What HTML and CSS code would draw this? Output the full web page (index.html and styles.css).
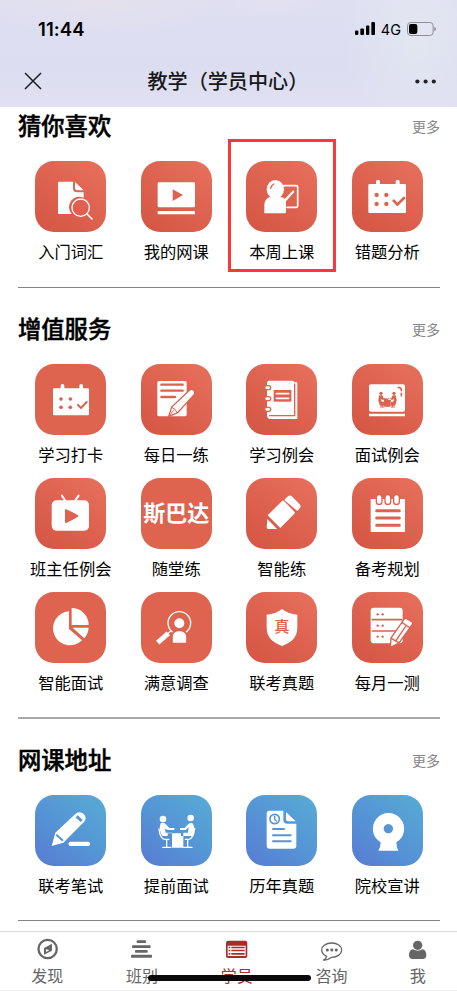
FILE: index.html
```html
<!DOCTYPE html>
<html lang="zh-CN">
<head>
<meta charset="utf-8">
<meta name="viewport" content="width=device-width, initial-scale=1">
<title>教学（学员中心）</title>
<link rel="stylesheet" href="styles.css">
</head>
<body>
<div class="app">
  <header class="topbar">
    <div class="status">
      <span class="time">11:44</span>
      <div class="status-right">
        <svg class="signal" viewBox="0 0 60 40"><rect x="0" y="25" width="10" height="14" rx="3"/><rect x="16" y="19" width="11" height="20" rx="3"/><rect x="33" y="10" width="10" height="29" rx="3"/><rect x="49" y="0" width="11" height="39" rx="3"/></svg>
        <span class="network">4G</span>
        <svg class="battery" viewBox="0 0 87 42"><rect x="1.5" y="1.5" width="77" height="39" rx="10" fill="none" stroke="#8d8e99" stroke-width="3"/><rect x="6" y="6" width="25" height="30" rx="6"/><path d="M82 14q5 3 5 7t-5 7z" fill="#8d8e99"/></svg>
      </div>
    </div>
    <div class="nav">
      <svg class="close" viewBox="0 0 18 18"><path d="M1 1l16 16M17 1L1 17"/></svg>
      <h1>教学（学员中心）</h1>
      <svg class="dots" viewBox="0 0 22 5"><circle cx="2.4" cy="2.5" r="2.1"/><circle cx="10.6" cy="2.5" r="2.1"/><circle cx="18.8" cy="2.5" r="2.1"/></svg>
    </div>
  </header>

  <main>
    <section class="section">
      <div class="section-head"><h2>猜你喜欢</h2><a class="more">更多</a></div>
      <div class="grid">
        <div class="item">
          <svg class="tile" viewBox="106 168 213 213"><path d="M178 230h42v20q0 12 12 12h20v16a31 31 0 0 0-36 49h-38q-3 0-3-3v-91q0-3 3-3z"/><path d="M226 231l26 25h-19q-7 0-7-7z"/><circle class="line" cx="243" cy="308" r="26" stroke-width="4"/><path class="line" d="M262 327l15 15" stroke-width="5"/></svg>
          <span>入门词汇</span>
        </div>
        <div class="item">
          <svg class="tile" viewBox="423 168 213 213"><rect x="473" y="232" width="112" height="75" rx="4"/><path class="cut" d="M518 253l31 17-31 18z"/><rect x="473" y="318" width="112" height="10" rx="2"/></svg>
          <span>我的网课</span>
        </div>
        <div class="item marked">
          <svg class="tile" viewBox="59 168 213 213"><path class="line" d="M172 242h38q4 0 4 4v57q0 4-4 4h-28" stroke-width="5"/><ellipse cx="147" cy="253" rx="26" ry="28"/><path d="M114 325v-24q0-16 14-24h38q5 0 9 5l24-25q4-1 5 4l-25 28v32q0 4-4 4z"/><path class="cutline" d="M133 250q2-8 9-13" stroke-width="4"/></svg>
          <span>本周上课</span>
        </div>
        <div class="item">
          <svg class="tile" viewBox="375 168 213 213"><rect x="447" y="224" width="12" height="24" rx="6"/><rect x="506" y="224" width="12" height="24" rx="6"/><rect x="424" y="237" width="113" height="87" rx="4"/><g class="cut"><circle cx="449" cy="270" r="6.5"/><circle cx="478" cy="270" r="6.5"/><circle cx="449" cy="297" r="6.5"/><circle cx="478" cy="297" r="6.5"/></g><path class="cutline" d="M500 287l11 12 20-20" stroke-width="8"/></svg>
          <span>错题分析</span>
        </div>
      </div>
    </section>

    <section class="section thick">
      <div class="section-head"><h2>增值服务</h2><a class="more">更多</a></div>
      <div class="grid">
        <div class="item">
          <svg class="tile flat" viewBox="106 162 213 213"><rect x="183" y="222" width="11" height="24" rx="5"/><rect x="239" y="222" width="11" height="24" rx="5"/><rect x="160" y="235" width="108" height="81" rx="4"/><g class="cut"><circle cx="184" cy="267" r="5.5"/><circle cx="212" cy="267" r="5.5"/><circle cx="184" cy="292" r="5.5"/><circle cx="212" cy="292" r="5.5"/></g><path class="cutline" d="M235 285l9 9 17-18" stroke-width="6"/></svg>
          <span>学习打卡</span>
        </div>
        <div class="item">
          <svg class="tile" viewBox="423 162 213 213"><rect x="472" y="213" width="88" height="106" rx="5"/><path class="cutline" d="M484 224h64M484 242h64M484 261h41" stroke-width="7"/><path class="edge" d="M506 320l9-29 54-51q6-4 12 1 6 6 2 12l-50 55z" stroke-width="4"/><path class="cutline" d="M515 292q11 3 16 15M507 318l13-16" stroke-width="3"/></svg>
          <span>每日一练</span>
        </div>
        <div class="item">
          <svg class="tile" viewBox="59 162 213 213"><path d="M128 212h70q5 0 5 4 10 0 10 3v108h-83q-8-2-8-10v-95q0-10 6-10z"/><path class="cutline" d="M205 222v95h-75" stroke-width="4"/><rect class="cut" x="142" y="240" width="53" height="35"/><path class="line" d="M150 251h37M150 265h37" stroke-width="5"/><g class="edge" stroke-width="4"><rect x="115" y="227" width="18" height="12" rx="6"/><rect x="115" y="260" width="18" height="12" rx="6"/><rect x="115" y="292" width="18" height="12" rx="6"/></g></svg>
          <span>学习例会</span>
        </div>
        <div class="item">
          <svg class="tile" viewBox="375 162 213 213"><rect x="426" y="223" width="108" height="82" rx="6"/><rect x="426" y="311" width="108" height="8" rx="1"/><g class="cut"><circle cx="462" cy="250" r="5"/><circle cx="501" cy="250" r="5"/><path d="M457 256h9l4 9h10v4h-13l-5-2 2 8h9v12h-14q-7-16-2-31zM506 256h-9l-4 9h-10v4h13l5-2-2 8h-9v12h14q7-16 2-31zM470 266h22l-2 24h-18z"/></g><path class="cutline" d="M456 268q-1 15 8 16M507 268q1 15-8 16M466 284v6M497 284v6M460 291h11M492 291h11" stroke-width="3"/><path class="cutline" d="M514 232q10 1 9 10M523 250v7" stroke-width="5"/></svg>
          <span>面试例会</span>
        </div>
        <div class="item">
          <svg class="tile" viewBox="106 24 213 213"><path class="line" d="M187 77l9 14M237 77l-10 14" stroke-width="6"/><rect x="156" y="91" width="112" height="91" rx="14"/><path class="cut" d="M198 117q39 18 39 21t-39 22q-2 0-2-4v-36q0-3 2-3z"/></svg>
          <span>班主任例会</span>
        </div>
        <div class="item">
          <div class="tile flat wordmark">斯巴达</div>
          <span>随堂练</span>
        </div>
        <div class="item">
          <svg class="tile" viewBox="59 24 213 213"><path d="M180 83l6-5q6-4 12 2l22 23q5 6 1 11l-8 9-39-33zM167 93q3-3 6 0l31 32q3 3 0 6l-42 43-38-38zM123 147l29 30h-26q-5 0-5-5z"/></svg>
          <span>智能练</span>
        </div>
        <div class="item">
          <svg class="tile" viewBox="375 24 213 213"><rect x="431" y="87" width="103" height="99" rx="2"/><g class="edge" stroke-width="4"><rect x="448" y="74" width="17" height="29" rx="8"/><rect x="474" y="74" width="17" height="29" rx="8"/><rect x="500" y="74" width="17" height="29" rx="8"/></g><path class="cutline" d="M449 122h68M449 144h68M449 166h68" stroke-width="9"/></svg>
          <span>备考规划</span>
        </div>
        <div class="item">
          <svg class="tile flat" viewBox="106 21 213 213"><path d="M208 79v53l39 34a51 51 0 1 1-39-87z"/><path d="M216 69a51 51 0 0 1 51 51h-51zM219 128h48q-1 17-13 32z"/></svg>
          <span>智能面试</span>
        </div>
        <div class="item">
          <svg class="tile flat" viewBox="423 21 213 213"><circle class="line" cx="538" cy="114" r="34" stroke-width="4"/><path class="line" d="M502 147l10-9" stroke-width="4"/><path class="line butt" d="M473 173l32-28" stroke-width="15"/><circle class="edge" cx="538" cy="115" r="17" stroke-width="4"/><path class="edge" d="M516 176v-21q0-19 22-19t23 19v21z" stroke-width="5"/></svg>
          <span>满意调查</span>
        </div>
        <div class="item">
          <svg class="tile" viewBox="59 21 213 213"><path d="M167 72q19 15 46 17v40q0 38-46 54-46-16-46-54v-40q27-2 46-17z"/><text x="167" y="142" class="seal">真</text></svg>
          <span>联考真题</span>
        </div>
        <div class="item">
          <svg class="tile" viewBox="375 21 213 213"><rect x="431" y="68" width="96" height="107" rx="9"/><path class="cutline" d="M436 104h88M436 138h72" stroke-width="5"/><g class="cut"><circle cx="452" cy="88" r="3.500"/><circle cx="467" cy="88" r="3.500"/><circle cx="452" cy="122" r="3.500"/><circle cx="467" cy="122" r="3.500"/><circle cx="452" cy="155" r="3.500"/><circle cx="467" cy="155" r="3.500"/></g><path class="edge" d="M490 187l2-28 39-56q4-5 10-1l14 9q4 3 1 7l-40 56z" stroke-width="4"/><path class="cutline" d="M493 160l22 13M506 168l30-44M524 112l26 17" stroke-width="4"/></svg>
          <span>每月一测</span>
        </div>
      </div>
    </section>

    <section class="section last">
      <div class="section-head"><h2>网课地址</h2><a class="more">更多</a></div>
      <div class="grid blue">
        <div class="item">
          <svg class="tile" viewBox="106 165 213 213"><path d="M156 318l11-40 60-56q10-10 22-2 14 10 6 24l-64 64z"/><path class="cutline butt" d="M170 284l20 18" stroke-width="6"/><path class="cutline butt" d="M231 229l15 14" stroke-width="9"/><rect x="207" y="305" width="64" height="13" rx="5"/></svg>
          <span>联考笔试</span>
        </div>
        <div class="item">
          <svg class="tile" viewBox="423 165 213 213"><circle cx="489" cy="237" r="10"/><circle cx="572" cy="234" r="10"/><path d="M482 250q8-4 15 2l11 12h15v6h-19l-9-4 2 12h19v45h34v-45h14l2-16-9 8h-17v-6h14l11-12q8-6 14-1 7 14 1 37h-37v-8h-40v8h-16q-12-18-5-38z"/><path class="line" d="M477 267q3 29 17 31h13M584 265q-3 29-17 33h-11M500 298v22M563 298v22M488 322h25M551 322h25" stroke-width="4"/></svg>
          <span>提前面试</span>
        </div>
        <div class="item">
          <svg class="tile" viewBox="59 165 213 213"><path d="M130 212h41v27q0 12 12 12h27v66q0 9-9 9h-71q-9 0-9-9v-96q0-9 9-9zM179 216l29 28h-22q-7 0-7-7z"/><circle class="cutline" cx="145" cy="237" r="14" stroke-width="5"/><path class="cutline" d="M145 229v9l5 5" stroke-width="4"/><path class="cutline" d="M140 267h33M140 286h53M140 304h53" stroke-width="6"/></svg>
          <span>历年真题</span>
        </div>
        <div class="item">
          <svg class="tile" viewBox="375 165 213 213"><path fill-rule="evenodd" d="M461 307a47 47 0 1 1 47 0q0 15 6 25h-60q7-10 7-25zM484 252a14 14 0 1 0 .1 0z"/></svg>
          <span>院校宣讲</span>
        </div>
      </div>
    </section>
  </main>

  <nav class="tabs">
    <a class="tab"><svg viewBox="110 115 64 64"><circle cx="142" cy="148" r="27.500" fill="none" stroke="currentColor" stroke-width="7"/><path fill-rule="evenodd" d="M155 132v21l-24 12v-20zM137 149v8l10-5z"/></svg><span>发现</span></a>
    <a class="tab"><svg viewBox="396 115 64 64"><rect x="413" y="122" width="28" height="8" rx="2"/><rect x="399" y="137" width="56" height="8" rx="2"/><rect x="408" y="151" width="38" height="8" rx="2"/><rect x="396" y="165" width="63" height="9" rx="2"/></svg><span>班别</span></a>
    <a class="tab active"><svg viewBox="678 115 64 64"><path fill-rule="evenodd" d="M684 123h52q6 0 6 6v40q0 6-6 6h-52q-6 0-6-6v-40q0-6 6-6zM683 138v31h54v-31z"/><path d="M686 141h5v5h-5zM694 141h40v5h-40zM686 150h5v5h-5zM694 150h40v5h-40zM686 160h5v5h-5zM694 160h40v5h-40z"/></svg><span>学员</span></a>
    <a class="tab"><svg viewBox="963 115 64 64"><path d="M980 170c-9-4-15-11-15-19 0-12 13-21 30-21s30 9 30 21-13 22-30 22c-5 4-13 9-25 9 6-3 9-7 10-12z" fill="none" stroke="currentColor" stroke-width="4"/><circle cx="982" cy="151" r="4.500"/><circle cx="995.500" cy="151" r="4.500"/><circle cx="1009" cy="151" r="4.500"/></svg><span>咨询</span></a>
    <a class="tab"><svg viewBox="1223 115 64 64"><circle cx="1255" cy="137" r="14"/><path d="M1241 149q14 9 28 0 12 2 12 17 0 12-11 12h-30q-11 0-11-12 0-15 12-17z"/></svg><span>我</span></a>
    <i class="home"></i>
  </nav>
</div>
</body>
</html>
```
FILE: styles.css
```css
* { box-sizing: border-box; }
body {
  margin: 0;
  background: #fff;
  color: #000;
  font-family: "Noto Sans CJK SC", sans-serif;
}
.app { height: 991px; display: flex; flex-direction: column; overflow: hidden; }
h1, h2 { margin: 0; }

.topbar {
  height: 107px;
  flex: none;
  background:
    radial-gradient(ellipse 75px 100px at 418px 35px, #e2e7f0 0%, transparent 100%),
    radial-gradient(ellipse 130px 35px at 100px 0, #e4e1ec 0%, transparent 100%),
    radial-gradient(ellipse 60px 20px at 270px 0, #e3e0f1 0%, transparent 100%),
    linear-gradient(#dfdff2 0, #dcddf1 60%, #e1e0f2 100%);
}
.status {
  height: 58px;
  padding: 0 21px 0 38px;
  display: flex;
  align-items: center;
  justify-content: space-between;
}
.time { font: 600 18.500px/22px Inter, sans-serif; letter-spacing: 0.1px; }
.status-right { display: flex; align-items: center; }
.signal { width: 20px; height: 13.500px; }
.network { font: 400 14.500px/20px Inter, sans-serif; margin: 2px 6px 0 6px; }
.battery { width: 29px; height: 14px; }
.nav {
  height: 46px;
  padding: 0 20px 0 24px;
  display: flex;
  align-items: center;
  justify-content: space-between;
}
.close { width: 18px; height: 18px; fill: none; stroke: #1c1c20; stroke-width: 1.5; }
.dots { width: 22px; height: 5px; fill: #222; }
h1 { font-size: 20.100px; font-weight: 500; line-height: 30px; color: #181818; width: 164px; margin-left: 2px; white-space: nowrap; }

main { flex: 1; padding-top: 4px; }
.section { margin: 0 17px 26px 18px; padding-bottom: 24px; border-bottom: 1px solid #858585; }
.section.thick { padding-bottom: 23px; border-bottom: 2px solid #aaa; }
.section.last { padding-bottom: 23px; margin-bottom: 0; border-bottom: 1px solid #858585; }
.section-head {
  height: 30px;
  margin-bottom: 20px;
  display: flex;
  align-items: center;
  justify-content: space-between;
}
h2 { font-size: 23.300px; font-weight: 500; -webkit-text-stroke: 0.5px #000; line-height: 30px; margin-top: -2px; }
.more { font-size: 14px; line-height: 30px; color: #888; margin-top: -1px; }
.grid { display: grid; grid-template-columns: repeat(4, 1fr); row-gap: 12px; }
.item { position: relative; display: flex; flex-direction: column; align-items: center; }
.item > span { margin-top: 7px; font-size: 16.300px; line-height: 24px; white-space: nowrap; }
.marked::after {
  content: "";
  position: absolute;
  inset: -22px -1.500px -9px -1px;
  border: 3px solid #fd3838;
}

.tile {
  --tone: #dd624f;
  width: 71px;
  height: 71px;
  border-radius: 19px;
  background: linear-gradient(35deg, #d45543, #dd624f 50%, #e7715e);
  fill: #fff;
}
.tile.flat { background: #de644f; }
.blue .tile { --tone: #5595d5; background: linear-gradient(40deg, #587bd3, #5595d5 50%, #57acd5); }
.line { fill: none; stroke: #fff; stroke-linecap: round; stroke-linejoin: round; }
.cut { fill: var(--tone); }
.cutline { fill: none; stroke: var(--tone); stroke-linecap: round; stroke-linejoin: round; }
.butt { stroke-linecap: butt; }
.edge { fill: #fff; stroke: var(--tone); }
.seal { font-size: 46px; font-weight: 500; text-anchor: middle; fill: var(--tone); }
.wordmark { color: #fff; font-size: 22px; font-weight: 700; line-height: 66px; text-align: center; white-space: nowrap; }

.tabs {
  position: relative;
  flex: none;
  height: 60px;
  display: grid;
  grid-template-columns: repeat(4, 94.700px) 1fr;
  background: #fff;
  border-top: 1px solid #d9d9d9;
  border-bottom: 1px solid #eee;
}
.tab { display: flex; flex-direction: column; align-items: center; color: #666; padding-top: 6px; }
.tab svg { width: 21.300px; height: 21.300px; fill: currentColor; flex: none; overflow: visible; }
.tab span { font-size: 16px; line-height: 24px; margin-top: 4px; }
.tab.active { color: #ab2b2b; }
.home { position: absolute; left: 148px; top: 43px; width: 163px; height: 6px; border-radius: 3px; background: #0a0a0a; }
```
